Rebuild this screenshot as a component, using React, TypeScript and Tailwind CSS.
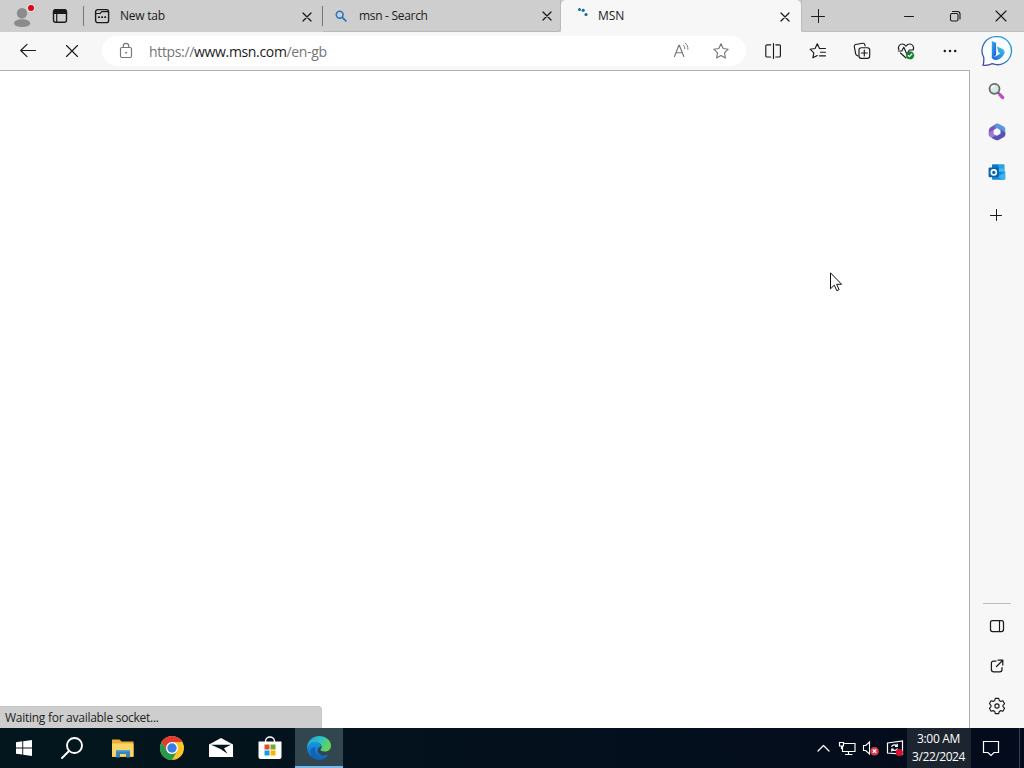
import type { ReactNode } from "react";

type IconProps = {
  children: ReactNode;
  w?: number;
  h?: number;
  className?: string;
};

// stroke icon, 1 unit = 1px
function Icon({ children, w = 18, h = 18, className = "" }: IconProps) {
  return (
    <svg
      width={w}
      height={h}
      viewBox={`0 0 ${w} ${h}`}
      fill="none"
      stroke="currentColor"
      strokeWidth="1.15"
      strokeLinecap="round"
      strokeLinejoin="round"
      className={`shrink-0 ${className}`}
    >
      {children}
    </svg>
  );
}

function CloseIcon() {
  return (
    <Icon w={10} h={10} className="mt-px">
      <path d="M1 1l8 8M9 1l-8 8" strokeWidth="1.3" />
    </Icon>
  );
}

function PlusIcon({ size = 14 }: { size?: number }) {
  return (
    <Icon w={size} h={size}>
      <path
        d={`M${size / 2 + 0.5} .5v${size - 1}M.5 ${size / 2 + 0.5}h${size - 1}`}
        strokeWidth="1"
      />
    </Icon>
  );
}

function TabStrip() {
  return (
    <div className="flex h-8 shrink-0 bg-[#cecece] text-[12px] text-[#1b1b1b]">
      <div className="flex h-8 w-[84px] items-center pl-3">
        <svg width="24" height="24" viewBox="0 0 24 24">
          <circle cx="10" cy="9.3" r="5.2" fill="#8b8b8b" />
          <path d="M2 19.800c0-3 3.200-4.500 8-4.500s8.300 1.500 8.300 4.500c-1 2.200-4.300 3.200-8.300 3.200s-7-1-8-3.200z" fill="#8b8b8b" />
          <circle cx="19" cy="4" r="4" fill="#eadada" />
          <circle cx="19" cy="4" r="3" fill="#d50b1c" />
        </svg>
        <Icon w={16} h={16} className="ml-4">
          <rect x="1.500" y="1.700" width="13" height="12.600" rx="2.200" strokeWidth="1.400" />
          <path d="M1.500 5.500V3.900a2.200 2.200 0 0 1 2.200-2.200h8.600a2.200 2.200 0 0 1 2.200 2.200v1.600z" fill="currentColor" />
          <path d="M4.700 5.500v8.500" strokeWidth="1.200" />
        </Icon>
      </div>
      <div className="mt-1.5 h-[20px] w-px -ml-px bg-[#777]" />
      <div className="flex h-8 w-[238px] items-center pl-2.5">
        <Icon w={16} h={16}>
          <rect x="1.600" y="1.600" width="13" height="13" rx="2.200" strokeWidth="1.400" />
          <path d="M2 5.500h4l1.700-1.900h6.500" />
          <path d="M4.800 9.200h.4M7.900 9.200h.4M11 9.200h.4" strokeWidth="1.700" />
        </Icon>
        <span className="ml-2.5 tracking-[-0.25px]">New tab</span>
        <span className="ml-auto mr-[10px]">
          <CloseIcon />
        </span>
      </div>
      <div className="mt-1.5 h-[20px] w-px bg-[#777]" />
      <div className="flex h-8 w-[238px] items-center rounded-br-[4px] border-r border-b border-[#b9b9b9] pl-3">
        <Icon w={12} h={12} className="text-[#2a77c2]">
          <circle cx="4.700" cy="4.700" r="3.400" strokeWidth="1.600" />
          <path d="M7.300 7.300l3.500 3.500" strokeWidth="1.800" />
        </Icon>
        <span className="ml-3 pt-px tracking-[-0.3px]">msn - Search</span>
        <span className="ml-auto mr-2">
          <CloseIcon />
        </span>
      </div>
      <div className="flex h-8 w-[240px] items-center rounded-t-[5px] bg-[#f7f7f7] pl-4">
        <svg width="16" height="16" viewBox="0 0 16 16" fill="#16699e">
          <circle cx="2.500" cy="1.500" r="1.500" />
          <circle cx="6.200" cy="2.300" r="1.600" />
          <circle cx="9" cy="6.500" r="1.600" />
        </svg>
        <span className="ml-[5px]">MSN</span>
        <span className="ml-auto mr-[11px]">
          <CloseIcon />
        </span>
      </div>
      <div className="flex h-8 flex-1 items-center rounded-bl-[4px] border-b border-l border-[#bdbdbd] pl-[9px]">
        <PlusIcon />
        <Icon w={12} h={12} className="ml-auto">
          <path d="M1.500 6.500h9" strokeWidth="1" />
        </Icon>
        <Icon w={12} h={12} className="ml-[34px]">
          <rect x="1.500" y="3.500" width="7.500" height="7.500" rx="1.500" strokeWidth="1.100" />
          <path d="M3.500 1.500h4.800a2.700 2.700 0 0 1 2.700 2.700V9" strokeWidth="1.100" />
        </Icon>
        <Icon w={12} h={12} className="ml-[34px] mr-[17px]">
          <path d="M1 1l10 10M11 1L1 11" />
        </Icon>
      </div>
    </div>
  );
}

function ToolButton({ children }: { children: ReactNode }) {
  return <div className="flex w-11 shrink-0 justify-center">{children}</div>;
}

function Toolbar() {
  return (
    <div className="flex h-[39px] shrink-0 items-center border-b border-[#b0b0b0] bg-[#f7f7f7] pl-1.5 text-[#1b1b1b]">
      <ToolButton>
        <Icon>
          <path d="M16.500 8.500H2M8 2.300L1.700 8.500 8 14.700" />
        </Icon>
      </ToolButton>
      <ToolButton>
        <Icon w={14} h={14}>
          <path d="M1.500 1.500l11 11M12.500 1.500l-11 11" />
        </Icon>
      </ToolButton>
      <div className="ml-2 flex h-[30px] w-[644px] shrink-0 items-center rounded-full bg-white pl-[15px] pr-4 text-[#757575]">
        <Icon>
          <rect x="3.500" y="5.500" width="11" height="10" rx="1.500" />
          <path d="M6.300 5.500V4a2.700 2.700 0 0 1 5.400 0v1.500" />
          <circle cx="9" cy="10.700" r=".7" fill="currentColor" strokeWidth=".5" />
        </Icon>
        <span className="ml-[14px] pt-px text-[14px] leading-none tracking-[-0.34px]">
          https://<span className="text-[#1b1b1b]">www.msn.com</span>/en-gb
        </span>
        <Icon className="ml-auto">
          <path d="M2.500 14.500L6.900 3.200h.4L11.800 14.500M4 10.700h6.300" />
          <path d="M11.300 3.200c1 .8 1.500 2 1.500 3.500M13.300 1.200c1.900 1.500 2.600 3.300 2.600 6" strokeWidth="1" />
        </Icon>
        <Icon className="ml-[22px]">
          <path d="M9 1.800l2.200 4.700 5 .7-3.700 3.600.9 5.200L9 13.500 4.600 16l.9-5.200-3.700-3.600 5-.7z" />
        </Icon>
      </div>
      <div className="ml-[5px] -mr-px flex shrink-0">
        <ToolButton>
          <Icon>
            <path d="M6.700 2.800H3a1.200 1.200 0 0 0-1.200 1.200v9.800A1.200 1.200 0 0 0 3 15h3.700M11.800 2.800h3.400a1.200 1.200 0 0 1 1.200 1.200v9.800a1.200 1.200 0 0 1-1.200 1.200h-3.400M9.500 1.500v15" />
          </Icon>
        </ToolButton>
        <ToolButton>
          <Icon className="ml-px">
            <path d="M10.500 6.500L8.300 1.800 6.100 6.500l-5 .7 3.700 3.600-.9 5 4.400-2.300M10.500 6.500h6M11.500 10.200h5M10.500 13.800h6" />
          </Icon>
        </ToolButton>
        <ToolButton>
          <Icon className="ml-px">
            <path d="M5 14l-1.300-.7a2 2 0 0 1-1-1.500L1.300 4.700a1.900 1.900 0 0 1 1.400-2.200l7-1.200a1.900 1.900 0 0 1 2.200 1.500l.2 1" />
            <rect x="6" y="5.700" width="10.700" height="10.700" rx="2.300" />
            <path d="M11.300 8v6M8.300 11h6" />
          </Icon>
        </ToolButton>
        <ToolButton>
          <Icon className="ml-px">
            <path d="M1.800 7.500C.6 4.700 2.600 2 5.300 2 7 2 8.200 3 9 4.200 9.800 3 11 2 12.700 2c2.700 0 4.700 2.700 3.500 5.500M3.500 11L9 16" />
            <path d="M1.300 9h3.500l2-3.800 3.100 7L12.300 8h4" />
            <circle cx="13" cy="13.300" r="3.900" fill="#14802b" stroke="#14802b" strokeWidth=".3" />
            <path d="M11.200 13.500l1.200 1.200 2.500-2.700" stroke="#fff" />
          </Icon>
        </ToolButton>
        <ToolButton>
          <svg width="16" height="18" viewBox="0 0 16 18" fill="currentColor" className="ml-px">
            <circle cx="2.800" cy="9" r="1.250" />
            <circle cx="8" cy="9" r="1.250" />
            <circle cx="13.200" cy="9" r="1.250" />
          </svg>
        </ToolButton>
      </div>
    </div>
  );
}

function BingLogo() {
  return (
    <svg width="32" height="32" viewBox="0 0 32 32">
      <defs>
        <linearGradient id="bubble" x1="0" y1="1" x2="1" y2="0">
          <stop offset="0" stopColor="#51389c" />
          <stop offset=".45" stopColor="#2473c8" />
          <stop offset="1" stopColor="#27aee4" />
        </linearGradient>
        <linearGradient id="bing" x1="0" y1="0" x2="1" y2="1">
          <stop offset="0" stopColor="#38aef4" />
          <stop offset="1" stopColor="#1456d6" />
        </linearGradient>
        <linearGradient id="bingTail" x1="0" y1="1" x2="1" y2="0">
          <stop offset="0" stopColor="#1b5ee0" />
          <stop offset="1" stopColor="#41cfe8" />
        </linearGradient>
      </defs>
      <path
        d="M16.300 1.700a14 14 0 1 1-5 27c-3 1.400-6 1.800-9.300 1.500 1-2.500 1-5 .7-8A14 14 0 0 1 16.300 1.700z"
        fill="#fafdff"
        stroke="url(#bubble)"
        strokeWidth="1.300"
      />
      <path d="M10.800 6l3.400 1.400c.6.300.9.700.9 1.400V20l-4.300 3.500z" fill="url(#bing)" />
      <path d="M16 11.500l5.300 2.200c2.200 1 3 3 1.900 5.300-1.500 3-5.200 6.100-8.500 6.100-2.400 0-3.900-1.600-3.900-4 1.400 1 2.900.8 4.400 0l4-2.700-1.800-1.100z" fill="url(#bingTail)" />
    </svg>
  );
}

function Sidebar() {
  return (
    <aside className="flex w-[54px] shrink-0 flex-col items-center bg-[#f7f7f7] pt-[3px] text-[#1b1b1b]">
      <BingLogo />
      <svg width="18" height="18" viewBox="0 0 18 18" className="mt-[15px]">
        <path d="M10 10.500l2.500 2.500" stroke="#555" strokeWidth="2" />
        <path d="M12 12.800l2.700 2.700" stroke="#bd4cc4" strokeWidth="3.200" strokeLinecap="round" />
        <circle cx="6.500" cy="6.800" r="5" fill="#d3eae8" stroke="#6a6a6a" strokeWidth="1.800" />
        <path d="M3.700 6.500A3 3 0 0 1 6.500 4" stroke="#fff" strokeWidth="1.300" fill="none" />
      </svg>
      <svg width="18" height="18" viewBox="0 0 18 18" className="mt-[23px]">
        <path d="M8.500.8L3 4C1.400 5 .8 6.200.8 8v4.500L5.500 10V7.200L9.500 4.500z" fill="#7757bd" />
        <path d="M7.500.9c1.200-.7 2.500-.6 3.600.1l4.500 2.600c1.200.7 1.700 1.600 1.700 3v5.200l-4.800-1.500V7.200L6.500 4z" fill="#5897dd" />
        <path d="M.8 9.700L5.500 7v3.700l5 3.100L7.800 17l-5.100-2.700C1.400 13.500.8 12.600.8 11.300z" fill="#9d79d4" />
        <path d="M5.500 13.800l7-3.600V6.500l4.800 3v1.800c0 1.400-.6 2.300-1.700 3l-4.500 2.500c-1.200.7-2.200.7-3.300.1L3.500 15z" fill="#5752b3" />
        <path d="M5.800 7.500L9 5.500l3.300 2v3.300L9 12.700l-3.200-2z" fill="#f7f7f7" />
      </svg>
      <svg width="18" height="18" viewBox="0 0 18 18" className="mt-[22px]">
        <rect x="4" y="1.200" width="12.500" height="9" rx="1" fill="#28a4e5" />
        <path d="M4 1.700h6.500V8H4z" fill="#1475c5" />
        <path d="M10.500 5.500h6v3.500h-6z" fill="#45b9ec" />
        <path d="M4 8.800h13.200v7a1 1 0 0 1-1 1H5a1 1 0 0 1-1-1z" fill="#1788d8" />
        <path d="M17.200 9l-8 5 6.500 2.800h.5a1 1 0 0 0 1-1z" fill="#35b5ee" />
        <rect x=".6" y="4.500" width="10.400" height="9.800" rx="1" fill="#0864b1" />
        <circle cx="5.800" cy="9.400" r="2.500" fill="none" stroke="#fff" strokeWidth="1.600" />
      </svg>
      <div className="mt-7 mr-0.5">
        <PlusIcon size={12} />
      </div>
      <div className="mt-auto h-px w-7 bg-[#bcbcbc]" />
      <Icon w={16} h={16} className="mt-[14px]">
        <rect x="1.500" y="2.500" width="13" height="11" rx="2" strokeWidth="1.250" />
        <path d="M10.500 2.500v11" />
      </Icon>
      <Icon w={16} h={16} className="mt-6">
        <path d="M7 3H4.700a2.300 2.300 0 0 0-2.300 2.300v6.200a2.300 2.300 0 0 0 2.300 2.300h6a2.300 2.300 0 0 0 2.300-2.300V9.500M9 2.200h4.800V7M13.800 2.200L7.500 8.500" strokeWidth="1.250" />
      </Icon>
      <Icon className="mt-[23px] mb-[13px]">
        <path d="M7.300 1.400h3.400l.6 2.200 1.400.8 2.200-.6 1.700 2.900L15 8.300v1.400l1.600 1.600-1.700 2.900-2.200-.6-1.400.8-.6 2.200H7.300l-.6-2.200-1.400-.8-2.200.6-1.700-2.900L3 9.700V8.300L1.400 6.700l1.700-2.900 2.200.6 1.400-.8z" />
        <circle cx="9" cy="9" r="2.100" />
      </Icon>
    </aside>
  );
}

function ChromeLogo() {
  return (
    <svg width="24" height="24" viewBox="0 0 24 24">
      <circle cx="12" cy="12" r="12" fill="#fbc52a" />
      <path d="M12 0a12 12 0 0 1 10.400 6H12L6.800 15 1.600 6A12 12 0 0 1 12 0z" fill="#e23c30" />
      <path d="M1.600 6a12 12 0 0 0 10.400 18l5.200-9a6 6 0 0 1-10.400 0z" fill="#249a50" />
      <circle cx="12" cy="12" r="6" fill="#fff" />
      <circle cx="12" cy="12" r="4.700" fill="#3a7de8" />
    </svg>
  );
}

function EdgeLogo() {
  return (
    <svg width="26" height="26" viewBox="0 0 26 26">
      <defs>
        <linearGradient id="edgeTop" x1="0" y1="0" x2="1" y2=".4">
          <stop offset="0" stopColor="#1d9ce2" />
          <stop offset=".55" stopColor="#2dc2c9" />
          <stop offset="1" stopColor="#62d653" />
        </linearGradient>
        <linearGradient id="edgeBody" x1="0" y1="0" x2="0" y2="1">
          <stop offset="0" stopColor="#1b95e0" />
          <stop offset="1" stopColor="#0c62bd" />
        </linearGradient>
      </defs>
      <path d="M1 13C1 9 4.500 7 8.500 7c4 0 6.500 2 6.500 4.500-1.800.2-3.300 1.700-3.300 3.900 0 3.700 4.300 6 9.300 4.600.8-.2 1.200.2.700.8A12 12 0 0 1 1 13z" fill="url(#edgeBody)" />
      <path d="M9.500 12c-1.600 4 .5 9.500 6.500 11.700-.8.700-2 1.200-3.500 1.200C8 24.500 4.500 21 4.500 17c0-2.800 2-4.700 5-5z" fill="#1262b4" />
      <path d="M1 13A12 12 0 0 1 13 1c7 0 12 4.500 12 9.700 0 3.700-3 5.800-6.300 5.800-2.500 0-4.200-.8-4.200-1.700 0-.7 1.200-1 1.200-2.800 0-2.500-2.700-5-6.500-5-4 0-7.200 2.700-8.200 6z" fill="url(#edgeTop)" />
    </svg>
  );
}

function Taskbar() {
  return (
    <footer className="flex h-10 shrink-0 bg-gradient-to-r from-[#03161d] to-[#040b1c] text-white">
      <div className="flex w-12 items-center justify-center">
        <svg width="16" height="16" viewBox="0 0 16 16" fill="#fff">
          <path d="M0 2.200l6.300-.9v6.200H0zM7.200 1.200L16 0v7.500H7.200zM0 8.400h6.300v6.200L0 13.700zM7.200 8.400H16V16l-8.800-1.200z" />
        </svg>
      </div>
      <div className="flex w-12 items-center justify-center">
        <Icon w={24} h={24}>
          <circle cx="14.500" cy="9.500" r="7.500" strokeWidth="1.900" />
          <path d="M9 15L2 22" strokeWidth="2" />
        </Icon>
      </div>
      <div className="ml-0.5 flex w-[49px] items-center justify-center">
        <svg width="22" height="20" viewBox="0 0 22 20">
          <path d="M0 1.500h7.500l2 2h12V19H0z" fill="#eaae35" />
          <path d="M0 5.500h21.500v13H0z" fill="#fbd468" />
          <path d="M4 19.500V12h14v7.500h-4V16H8v3.500z" fill="#3784b9" />
          <path d="M4 12h14v1.500H4z" fill="#58a5d4" />
        </svg>
      </div>
      <div className="flex w-[49px] items-center justify-center">
        <ChromeLogo />
      </div>
      <div className="flex w-[49px] items-center justify-center">
        <svg width="24" height="20" viewBox="0 0 24 20">
          <path d="M0 6.500L12 0l12 6.500V19H0z" fill="#fff" />
          <path d="M2 6.700h20L15 10.300l3.500 5.500L11.500 11z" fill="#04151f" />
        </svg>
      </div>
      <div className="flex w-[49px] items-center justify-center">
        <svg width="24" height="24" viewBox="0 0 24 24">
          <path d="M7.500 7V5.200C7.500 2.800 9.500 1 12 1s4.500 1.800 4.500 4.200V7" fill="none" stroke="#fff" strokeWidth="1.400" />
          <path d="M.5 5.500h23V21a2 2 0 0 1-2 2h-19a2 2 0 0 1-2-2z" fill="#fff" />
          <path d="M6.500 8.500h5v5h-5z" fill="#e44d2a" />
          <path d="M12.500 8.500h5v5h-5z" fill="#76a927" />
          <path d="M6.500 14.500h5v5h-5z" fill="#189edd" />
          <path d="M12.500 14.500h5v5h-5z" fill="#f8b400" />
        </svg>
      </div>
      <div className="ml-px flex w-12 items-center justify-center border-b-2 border-[#76b9ed] bg-[#324650] pt-0.5">
        <EdgeLogo />
      </div>
      <div className="ml-auto flex items-center">
        <Icon w={14} h={14}>
          <path d="M1 10l5.500-5.500L12 10" strokeWidth="1.300" />
        </Icon>
        <Icon w={18} h={18} className="ml-[7px]">
          <path d="M6.500 4.500H17v8H4.500V7.500M10.500 12.500v3M7.500 15.500h6.500" strokeLinejoin="miter" />
          <path d="M1.500 3.500h4v3.500h-4zM3.500 7v2.500h1" strokeLinejoin="miter" />
        </Icon>
        <svg width="18" height="18" viewBox="0 0 18 18" className="ml-[6px]">
          <path d="M1.500 6.500h2.200L7.500 3v12l-3.800-3.500H1.500z" fill="none" stroke="#fff" strokeWidth="1.100" />
          <circle cx="12.500" cy="12.200" r="4.300" fill="#db3a45" />
          <path d="M10.800 10.500l3.400 3.400M14.200 10.500l-3.400 3.400" stroke="#fff" strokeWidth="1.300" />
        </svg>
        <svg width="18" height="18" viewBox="0 0 18 18" className="ml-1.5">
          <path d="M1.500 4l15-2v13l-15-1z" fill="none" stroke="#fff" strokeWidth="1.200" />
          <path d="M5.500 7.800c.8-2 4-2.700 5.500-1M11.300 4.800v2.500H9M11.500 9.500c-.8 2-3.800 2.700-5.500 1M5.700 12.500V10h2" fill="none" stroke="#fff" strokeWidth="1.200" />
          <circle cx="13.300" cy="13.500" r="3.600" fill="#d90e30" />
        </svg>
        <div className="ml-[3px] flex h-10 w-[64px] flex-col items-center justify-center bg-[#1c2430] pr-px text-[12px] leading-[18px]">
          <span className="whitespace-nowrap tracking-[-0.3px]">3:00 AM</span>
          <span className="whitespace-nowrap tracking-[-0.45px]">3/22/2024</span>
        </div>
        <Icon w={18} h={18} className="ml-[11px]">
          <path d="M1.500 2.500h15v11h-4.500l-3 3-3-3H1.500z" strokeWidth="1.200" strokeLinejoin="miter" />
        </Icon>
        <div className="ml-[19px] h-10 w-px bg-[#39424f]" />
        <div className="w-1" />
      </div>
    </footer>
  );
}

export default function App() {
  return (
    <div className="relative flex h-[768px] w-[1024px] flex-col overflow-hidden bg-white font-['Open_Sans','Noto_Sans',sans-serif]">
      <TabStrip />
      <div className="flex min-h-0 flex-1">
        <div className="flex w-[970px] flex-col">
          <Toolbar />
          <main className="flex flex-1 items-end border-r border-[#b0b0b0] bg-white">
            <div className="flex h-[22px] w-[322px] items-center rounded-tr-[4px] border-t border-r border-[#c6c6c6] bg-[#cecece] pl-[5px] text-[12px] text-[#222]">
              <span className="tracking-[-0.27px]">Waiting for available socket...</span>
            </div>
          </main>
        </div>
        <Sidebar />
      </div>
      <Taskbar />

      {/* mouse pointer */}
      <svg width="14" height="22" viewBox="0 0 14 22" className="absolute left-[830px] top-[272px]">
        <path d="M.5 .8v16l3.800-3.600 2.500 5.500 2.300-1-2.500-5.400h5z" fill="#fff" stroke="#111" strokeWidth="1" />
      </svg>
    </div>
  );
}
